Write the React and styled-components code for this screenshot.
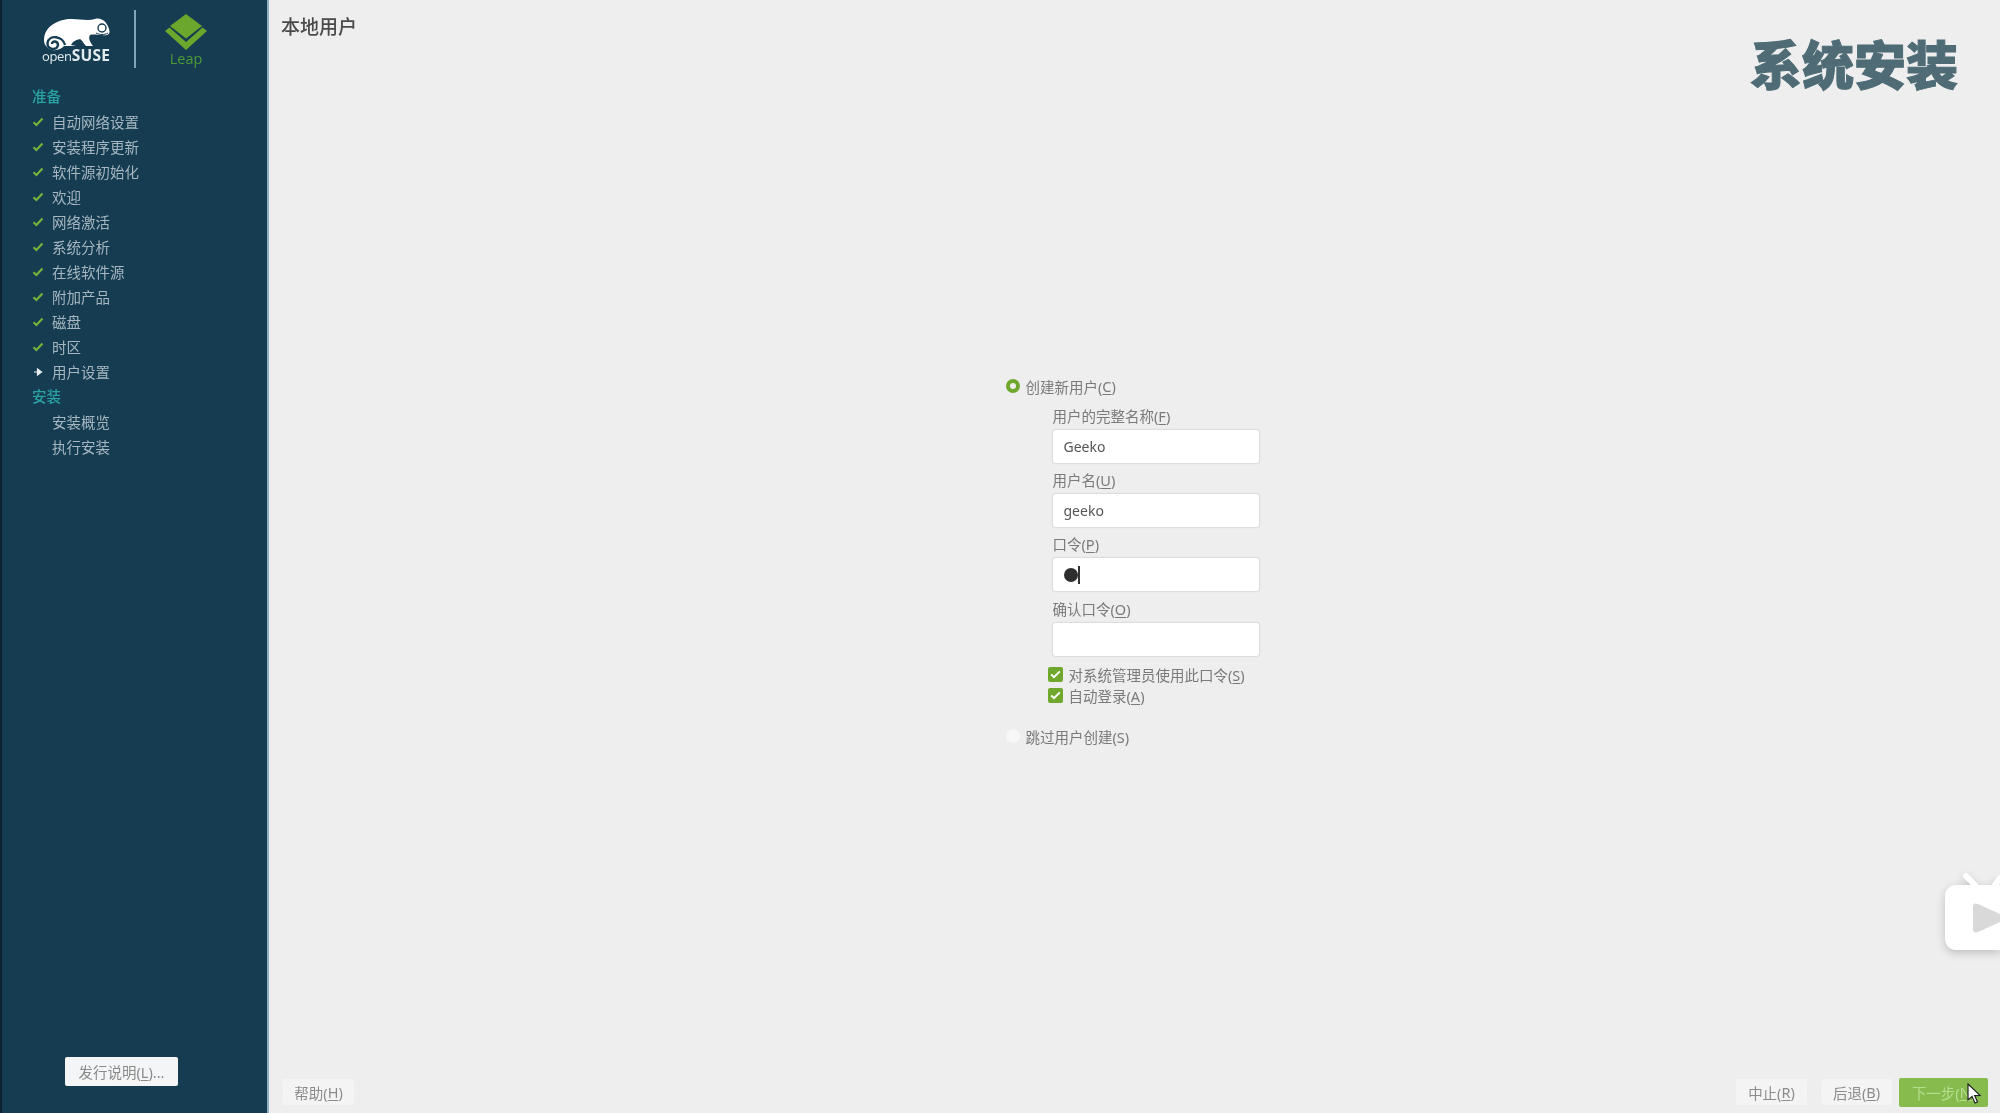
import React from "react";
import styled, { createGlobalStyle } from "styled-components";

const cjk = `"Noto Sans", "Noto Sans CJK SC", sans-serif`;

const Global = createGlobalStyle`
  html, body { margin: 0; padding: 0; background: #eeeeee; overflow: hidden; }
  #root { width: 2000px; height: 1113px; }
  * { box-sizing: border-box; }
`;

const Screen = styled.div`
  position: relative;
  display: flex;
  width: 2000px;
  height: 1113px;
  overflow: hidden;
  background: #eeeeee;
  font-family: ${cjk};
  font-size: 14.5px;
  color: #7a7a7a;
  filter: blur(0.75px);
`;

const Sidebar = styled.aside`
  display: flex;
  flex-direction: column;
  flex: 0 0 269px;
  height: 100%;
  background: #153c51;
  border-left: 2px solid #0c2230;
  border-right: 2px solid #8fb0c0;
`;

const Brand = styled.div`
  display: flex;
  align-items: flex-start;
  height: 84px;
  padding: 10px 0 0 36px;
`;

const SuseMark = styled.div`
  display: flex;
  flex-direction: column;
  align-items: center;
  width: 76px;
  padding-top: 6px;
`;

const SuseWord = styled.div`
  margin-top: -4px;
  font-family: "Open Sans", sans-serif;
  font-size: 13px;
  line-height: 15px;
  color: #e4ebee;
  letter-spacing: -0.3px;
  span { font-weight: 700; font-size: 15.5px; letter-spacing: 0.2px; }
`;

const Divider = styled.div`
  width: 2px;
  height: 58px;
  margin: 0 0 0 20px;
  background: #7fa6b8;
`;

const LeapMark = styled.div`
  display: flex;
  flex-direction: column;
  align-items: center;
  width: 44px;
  margin: 3px 0 0 28px;
`;

const LeapWord = styled.div`
  margin-top: -1px;
  font-family: "Open Sans", sans-serif;
  font-size: 14.5px;
  line-height: 18px;
  color: #4e9a35;
`;

const Nav = styled.nav`
  display: flex;
  flex-direction: column;
  flex: 1;
`;

const Heading = styled.div`
  height: 25px;
  padding-left: 30px;
  line-height: 25px;
  font-weight: 500;
  color: #2ba3a3;
`;

const Step = styled.div`
  display: flex;
  align-items: center;
  height: 25px;
  padding-left: 30px;
  color: #a6b7c1;
`;

const StepIcon = styled.span`
  display: flex;
  align-items: center;
  flex: 0 0 20px;
`;

const Notes = styled.div`
  display: flex;
  justify-content: center;
  padding: 0 0 27px 0;
  margin-right: 26px;
`;

const NotesButton = styled.div`
  display: flex;
  align-items: center;
  justify-content: center;
  width: 113px;
  height: 29px;
  border-radius: 2px;
  background: #f4f5f6;
  color: #8a8a8a;
`;

const Main = styled.main`
  display: flex;
  flex-direction: column;
  flex: 1;
  min-width: 0;
`;

const Header = styled.header`
  display: flex;
  align-items: flex-start;
  justify-content: space-between;
  height: 100px;
  padding: 10px 42px 0 12px;
`;

const Title = styled.h1`
  margin: 0;
  font-size: 19px;
  line-height: 34px;
  font-weight: 500;
  color: #4a4a4a;
`;

const Banner = styled.div`
  margin-top: 20px;
  font-family: "Noto Sans CJK SC", sans-serif;
  font-size: 52px;
  line-height: 66px;
  font-weight: 900;
  color: #4f6c76;
  -webkit-text-stroke: 1px #4f6c76;
`;

const Content = styled.section`
  display: flex;
  justify-content: center;
  flex: 1;
  padding-top: 276px;
`;

const Form = styled.div`
  display: flex;
  flex-direction: column;
  width: 258px;
`;

const RadioRow = styled.div`
  display: flex;
  align-items: center;
  height: 20px;
  margin-top: ${(p) => p.$top || 0}px;
`;

const Radio = styled.span`
  flex: 0 0 14px;
  width: 14px;
  height: 14px;
  margin-right: 6px;
  border-radius: 50%;
  background: ${(p) => (p.$on ? "#eeeeee" : "#f7f7f7")};
  border: ${(p) => (p.$on ? "4px solid #6fa82c" : "none")};
`;

const Fields = styled.div`
  display: flex;
  flex-direction: column;
  padding-left: 47px;
`;

const Label = styled.div`
  height: 26px;
  margin-top: ${(p) => p.$top}px;
  line-height: 24px;
`;

const Input = styled.div`
  display: flex;
  align-items: center;
  width: 206px;
  height: 33px;
  padding-left: 11px;
  border-radius: 2px;
  background: #ffffff;
  box-shadow: 0 0 2px rgba(0, 0, 0, 0.28);
  font-size: 14px;
  color: #555555;
`;

const Dot = styled.span`
  width: 14px;
  height: 14px;
  border-radius: 50%;
  background: #2e2e2e;
`;

const Caret = styled.span`
  width: 2px;
  height: 18px;
  background: #333333;
`;

const Checks = styled.div`
  display: flex;
  flex-direction: column;
  margin: 8px 0 0 42px;
`;

const CheckRow = styled.div`
  display: flex;
  align-items: center;
  height: 21px;
`;

const Check = styled.span`
  display: flex;
  align-items: center;
  justify-content: center;
  flex: 0 0 15px;
  height: 15px;
  margin-right: 6px;
  border-radius: 2px;
  background: #6fa82c;
`;

const U = styled.u`
  text-underline-offset: 2px;
`;

const Footer = styled.footer`
  display: flex;
  align-items: center;
  height: 41px;
  padding: 0 12px 1px 14px;
`;

const Button = styled.div`
  position: relative;
  display: flex;
  align-items: center;
  justify-content: center;
  width: ${(p) => (p.$next ? 89 : 71)}px;
  height: ${(p) => (p.$next ? 29 : 26)}px;
  margin-left: ${(p) => p.$gap || 0}px;
  border-radius: 2px;
  background: ${(p) => (p.$next ? "#87bb4e" : "#f4f4f4")};
  color: ${(p) => (p.$next ? "#b5de8d" : "#8c8c8c")};
`;

const Spacer = styled.div`
  flex: 1;
`;

const Pointer = styled.svg`
  position: absolute;
  left: 67px;
  top: 5px;
`;

const TvBadge = styled.svg`
  position: absolute;
  right: 0;
  top: 870px;
  filter: drop-shadow(0 3px 4px rgba(0, 0, 0, 0.2));
`;

const Tick = () => (
  <svg width="12" height="10" viewBox="0 0 12 10">
    <path d="M1.5 5.2 L4.4 8 L10.5 1.6" fill="none" stroke="#73b53a" strokeWidth="2.2" />
  </svg>
);

const Arrow = () => (
  <svg width="12" height="10" viewBox="0 0 12 10">
    <path d="M2 5 H6 M5.5 2 L9.5 5 L5.5 8 Z" fill="#e8eef1" stroke="#e8eef1" strokeWidth="1.2" />
  </svg>
);

const Chameleon = () => (
  <svg width="72" height="36" viewBox="40 15 72 36">
    <path
      fill="#ffffff"
      d="M44 38 C45 25 58 18 72 18 C80 18 88 20 95 18 C102 16 108 22 109.5 30 C110 34 106 35 102 34 C97 34 93 33 90 34 C88 37 90 41 93 45 L86 45 C83 42 82 39 80 38 C76 39 73 40 71 44 L76 45 L64 45 C60 50 50 51 46 45 C44 43 44 40 44 38 Z"
    />
    <path
      fill="none"
      stroke="#153c51"
      strokeWidth="2.4"
      d="M65 44 C63 35 49 33 47.5 42 C47 49 57 50 58 44 C58 40 52 39 52 43"
    />
    <circle cx="102" cy="27" r="4" fill="none" stroke="#153c51" strokeWidth="1.4" />
    <path d="M96 32 C100 34 104 34 108 32" fill="none" stroke="#153c51" strokeWidth="1" />
  </svg>
);

const LeapLogo = () => (
  <svg width="44" height="38" viewBox="165 13 44 38">
    <path d="M187 14 L203 26 L187 38.5 L171 26 Z" fill="#6ba72c" />
    <path d="M166 31 L187 50 L208 31 L203.5 27.5 L187 42 L170.5 27.5 Z" fill="#6ba72c" />
  </svg>
);

const done = ["自动网络设置", "安装程序更新", "软件源初始化", "欢迎", "网络激活", "系统分析", "在线软件源", "附加产品", "磁盘", "时区"];

const Field = ({ top, name, mark, children }) => (
  <>
    <Label $top={top}>
      {name}(<U>{mark}</U>)
    </Label>
    <Input>{children}</Input>
  </>
);

export default function App() {
  return (
    <>
      <Global />
      <Screen>
        <Sidebar>
          <Brand>
            <SuseMark>
              <Chameleon />
              <SuseWord>open<span>SUSE</span></SuseWord>
            </SuseMark>
            <Divider />
            <LeapMark>
              <LeapLogo />
              <LeapWord>Leap</LeapWord>
            </LeapMark>
          </Brand>
          <Nav>
            <Heading>准备</Heading>
            {done.map((s) => (
              <Step key={s}>
                <StepIcon><Tick /></StepIcon>
                {s}
              </Step>
            ))}
            <Step>
              <StepIcon><Arrow /></StepIcon>
              用户设置
            </Step>
            <Heading>安装</Heading>
            <Step><StepIcon />安装概览</Step>
            <Step><StepIcon />执行安装</Step>
          </Nav>
          <Notes>
            <NotesButton>发行说明(<U>L</U>)...</NotesButton>
          </Notes>
        </Sidebar>
        <Main>
          <Header>
            <Title>本地用户</Title>
            <Banner>系统安装</Banner>
          </Header>
          <Content>
            <Form>
              <RadioRow>
                <Radio $on />
                创建新用户(<U>C</U>)
              </RadioRow>
              <Fields>
                <Field top={8} name="用户的完整名称" mark="F">Geeko</Field>
                <Field top={5} name="用户名" mark="U">geeko</Field>
                <Field top={5} name="口令" mark="P"><Dot /><Caret /></Field>
                <Field top={6} name="确认口令" mark="O" />
              </Fields>
              <Checks>
                <CheckRow>
                  <Check>
                    <svg width="11" height="9" viewBox="0 0 11 9">
                      <path d="M1.2 4.5 L4 7.2 L9.8 1.4" fill="none" stroke="#ffffff" strokeWidth="2" />
                    </svg>
                  </Check>
                  对系统管理员使用此口令(<U>S</U>)
                </CheckRow>
                <CheckRow>
                  <Check>
                    <svg width="11" height="9" viewBox="0 0 11 9">
                      <path d="M1.2 4.5 L4 7.2 L9.8 1.4" fill="none" stroke="#ffffff" strokeWidth="2" />
                    </svg>
                  </Check>
                  自动登录(<U>A</U>)
                </CheckRow>
              </Checks>
              <RadioRow $top={20}>
                <Radio />
                跳过用户创建(S)
              </RadioRow>
            </Form>
          </Content>
          <Footer>
            <Button>帮助(<U>H</U>)</Button>
            <Spacer />
            <Button>中止(<U>R</U>)</Button>
            <Button $gap={14}>后退(<U>B</U>)</Button>
            <Button $next $gap={7}>
              下一步(<U>N</U>)
              <Pointer width="16" height="22" viewBox="0 0 16 22">
                <path d="M2 1 L2 17 L6 13.5 L9 20 L11.5 19 L8.6 12.6 L14 12.4 Z" fill="#ffffff" stroke="#222222" strokeWidth="1.2" />
              </Pointer>
            </Button>
          </Footer>
        </Main>
        <TvBadge width="58" height="84" viewBox="0 0 58 84">
          <path d="M24 6 L33 15 M53 15 L58 8" stroke="#ffffff" strokeWidth="6" strokeLinecap="round" />
          <rect x="3" y="15" width="80" height="65" rx="11" fill="#ffffff" />
          <path d="M31 37 Q31 32 36 34 L58 44 L58 52 L36 62 Q31 64 31 59 Z" fill="#d9d9d9" />
        </TvBadge>
      </Screen>
    </>
  );
}
